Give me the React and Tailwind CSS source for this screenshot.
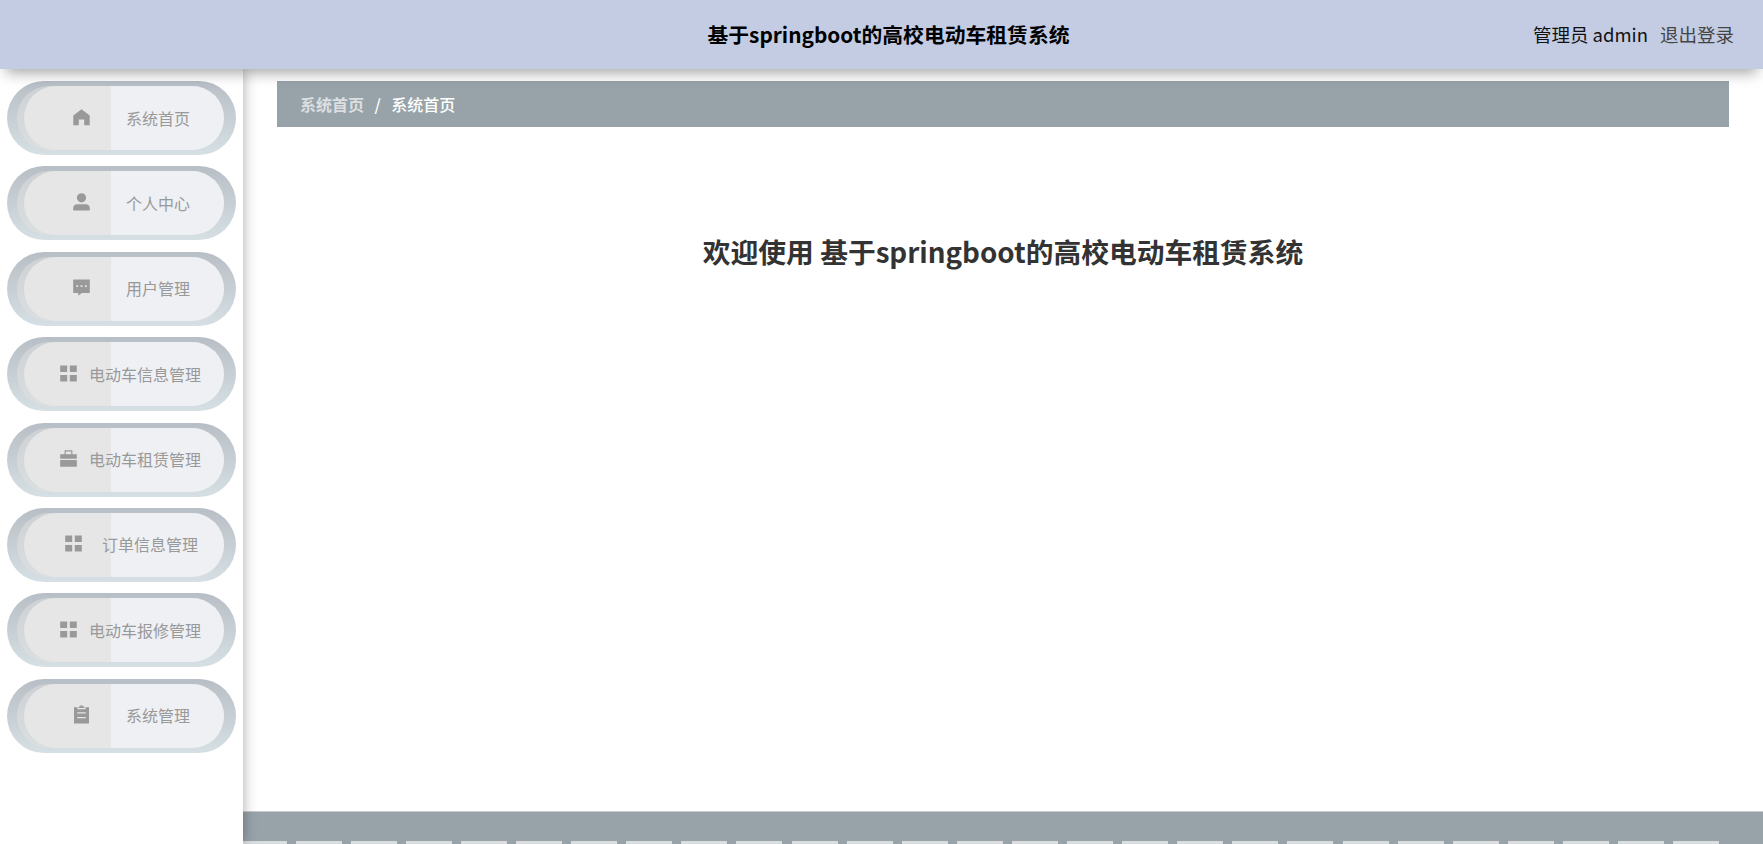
import React from 'react';

const HomeIcon = () => (
  <svg viewBox="0 0 17 17" className="h-[17px] w-[17px] fill-current">
    <path d="M8.5 0.3 0.3 6.6V16.3H5.8V10.5H11.2V16.3H16.7V6.6Z" />
  </svg>
);

const UserIcon = () => (
  <svg viewBox="0 0 17 18" className="h-[18px] w-[17px] fill-current">
    <circle cx="8.5" cy="4.8" r="4.6" />
    <path d="M0.2 17.6V15.2C0.2 12.8 2 11.2 4.3 11.2H12.7C15 11.2 16.8 12.8 16.8 15.2V17.6Z" />
  </svg>
);

const ChatIcon = () => (
  <svg viewBox="0 0 17 17" className="h-[17px] w-[17px] fill-current">
    <path
      fillRule="evenodd"
      d="M0.2 0.5H16.8V14H8.8L5.2 16.7V14H0.2ZM3.3 6.2V8H5.1V6.2ZM7.6 6.2V8H9.4V6.2ZM11.9 6.2V8H13.7V6.2Z"
    />
  </svg>
);

const GridIcon = () => (
  <svg viewBox="0 0 17 17" className="h-[17px] w-[17px] fill-current">
    <path d="M0.2 0.4H7.2V7.1H0.2ZM9.8 0.4H16.8V7.1H9.8ZM0.2 9.9H7.2V16.6H0.2ZM9.8 9.9H16.8V16.6H9.8Z" />
  </svg>
);

const CaseIcon = () => (
  <svg viewBox="0 0 17 17" className="h-[17px] w-[17px] fill-current">
    <path
      fillRule="evenodd"
      d="M4.6 0.3H12.4V4.2H16.8V8.8H0.2V4.2H4.6ZM5.8 1.6V4.2H11.2V1.6ZM0.2 10H16.8V16.7H0.2Z"
    />
  </svg>
);

const ClipboardIcon = () => (
  <svg viewBox="0 0 17 19" className="h-[19px] w-[17px] fill-current">
    <path
      fillRule="evenodd"
      d="M1 2.3H4.5V4.2H12.5V2.3H16V18.5H1ZM4.2 7.2V8.4H12.8V7.2ZM4.2 12V13.2H12.8V12Z"
    />
    <path d="M5.6 1.5H7.2V0.5H9.8V1.5H11.4V3H5.6Z" />
  </svg>
);

const menus = [
  { name: '系统首页', icon: HomeIcon, layout: 'pl-[49px] gap-[36px]' },
  { name: '个人中心', icon: UserIcon, layout: 'pl-[49px] gap-[36px]' },
  { name: '用户管理', icon: ChatIcon, layout: 'pl-[49px] gap-[36px]' },
  { name: '电动车信息管理', icon: GridIcon, layout: 'pl-[35.5px] gap-[12.5px]' },
  { name: '电动车租赁管理', icon: CaseIcon, layout: 'pl-[35.5px] gap-[12.5px]' },
  { name: '订单信息管理', icon: GridIcon, layout: 'pl-[41px] gap-[20px]' },
  { name: '电动车报修管理', icon: GridIcon, layout: 'pl-[35.5px] gap-[12.5px]' },
  { name: '系统管理', icon: ClipboardIcon, layout: 'pl-[49px] gap-[36px]' },
];

const MenuItem = ({ item }) => {
  const Icon = item.icon;
  return (
    <li className="h-[74px] w-[229.5px] shrink-0 rounded-full bg-linear-to-b from-[#b8bec5] to-[#d6e0e4] pt-[5px] pl-[10.5px]">
      <div className="h-[64px] w-[207px] rounded-full bg-linear-to-b from-[#cdd1d4] to-[#dbdfe0] pl-[7px]">
        <div
          className={`flex h-[64px] w-[200px] items-center rounded-full bg-[linear-gradient(90deg,#e6e6e6_87px,#eef0f4_87px)] text-[#999] ${item.layout}`}
        >
          <span className="pb-[2px]">
            <Icon />
          </span>
          <span className="pb-px text-base whitespace-nowrap">{item.name}</span>
        </div>
      </div>
    </li>
  );
};

const Header = () => (
  <header className="relative z-20 flex h-[69px] shrink-0 items-center justify-center bg-[#c3cce3] pt-px pl-[14px] shadow-[0_10px_13px_-6px_rgba(0,0,0,0.35)]">
    <h1 className="text-[20.8px] font-bold text-black">基于springboot的高校电动车租赁系统</h1>
    <div className="absolute right-[29px] flex gap-3 text-[18.5px]">
      <span className="text-[#111]">管理员 admin</span>
      <span className="text-[#444]">退出登录</span>
    </div>
  </header>
);

const App = () => (
  <div className="flex h-[844px] w-[1763px] flex-col overflow-hidden bg-white font-['Noto_Sans_CJK_SC',sans-serif]">
    <Header />
    <div className="flex min-h-0 flex-1">
      <aside className="relative z-10 w-[243px] shrink-0 bg-white shadow-[1px_0_12px_rgba(0,0,0,0.3)]">
        <ul className="flex flex-col gap-[11.4px] pt-[12px] pl-[6.5px]">
          {menus.map((item) => (
            <MenuItem key={item.name} item={item} />
          ))}
        </ul>
      </aside>
      <div className="flex flex-1 flex-col">
        <main className="flex flex-1 flex-col pt-[12px] pr-[34px] pl-[34px]">
          <nav className="flex h-[46px] items-center gap-[10.5px] bg-[#98a3a9] pl-[23px] text-base">
            <span className="font-bold text-[#dcdfe0]">系统首页</span>
            <span className="font-medium text-white">/</span>
            <span className="font-medium text-white">系统首页</span>
          </nav>
          <h2 className="mt-[104px] text-center text-[27.75px] font-bold text-[#333]">
            欢迎使用 基于springboot的高校电动车租赁系统
          </h2>
        </main>
        <footer className="flex h-[33.5px] shrink-0 flex-col justify-end border-t border-[#c5cbcf] bg-[#98a3a9]">
          <div className="h-[3px] w-[1476px] bg-[repeating-linear-gradient(90deg,#d9dde0_0_43.5px,#98a3a9_43.5px_52.6px,#d9dde0_52.6px_55.1px)]" />
        </footer>
      </div>
    </div>
  </div>
);

export default App;
